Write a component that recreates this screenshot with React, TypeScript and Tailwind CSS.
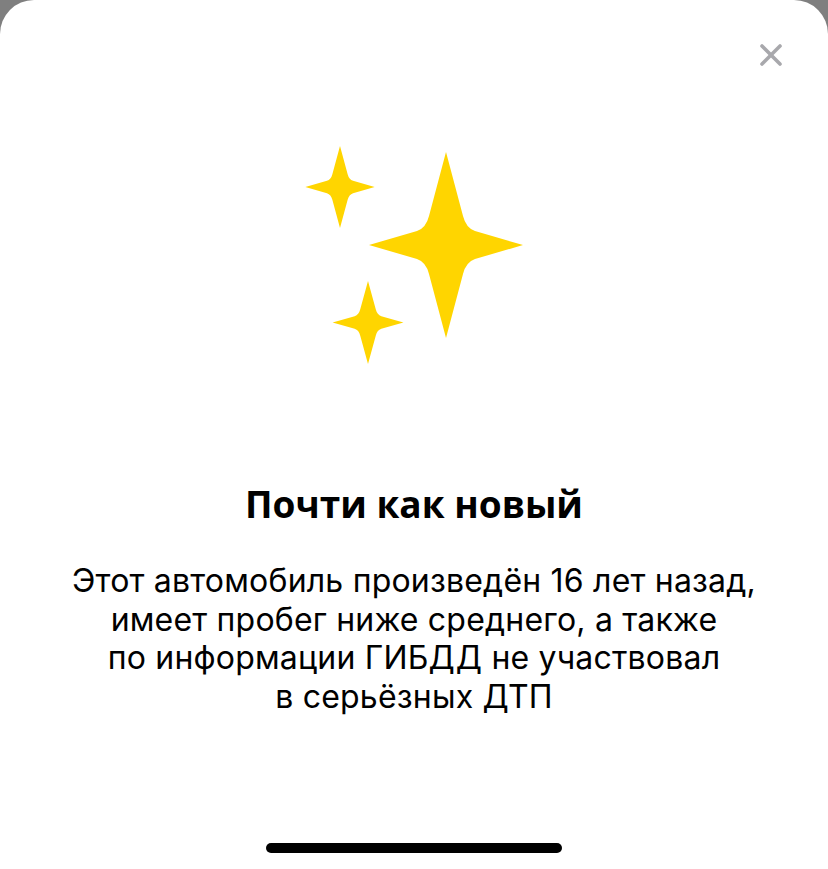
import { X } from 'lucide-react';

const starPath =
  'M0 -93 L-17 -29 Q-20 -17 -29 -14 L-77 0 L-29 14 Q-20 17 -17 29 L0 93 L17 29 Q20 17 29 14 L77 0 L29 -14 Q20 -17 17 -29 Z';

const Sparkles = () => (
  <svg width="222" height="220" viewBox="303 146 222 220" className="block">
    <g fill="#FFD500">
      <path d={starPath} transform="translate(446 246)" />
      <path d={starPath} transform="translate(340 188) scale(0.45 0.44)" />
      <path d={starPath} transform="translate(368 323.5) scale(0.46 0.445)" />
    </g>
  </svg>
);

export default function App() {
  return (
    <div className="min-h-[869px] bg-[#7f7f7f]">
      <div
        className="h-[869px] bg-white rounded-t-[34px] flex flex-col items-center text-black"
        style={{ fontFamily: 'Inter, "Noto Sans", sans-serif' }}
      >
        <div className="w-full flex justify-end pt-[37px] pr-[39px]">
          <button className="w-[36px] h-[36px] flex items-center justify-center text-[#a8a8ac]">
            <X size={36} strokeWidth={2.4} />
          </button>
        </div>
        <div className="mt-[72px]">
          <Sparkles />
        </div>
        <h1 className="mt-[118px] text-[37px] leading-[42px] font-bold font-['Open_Sans',sans-serif]">
          Почти как новый
        </h1>
        <p className="mt-[37px] text-[32px] leading-[38.5px] text-center tracking-[0.2px]">
          Этот автомобиль произведён 16 лет назад,
          <br />
          имеет пробег ниже среднего, а также
          <br />
          по информации ГИБДД не участвовал
          <br />
          в серьёзных ДТП
        </p>
        <div className="flex-1" />
        <div className="mb-[16px] w-[296px] h-[10px] rounded-full bg-black" />
      </div>
    </div>
  );
}
